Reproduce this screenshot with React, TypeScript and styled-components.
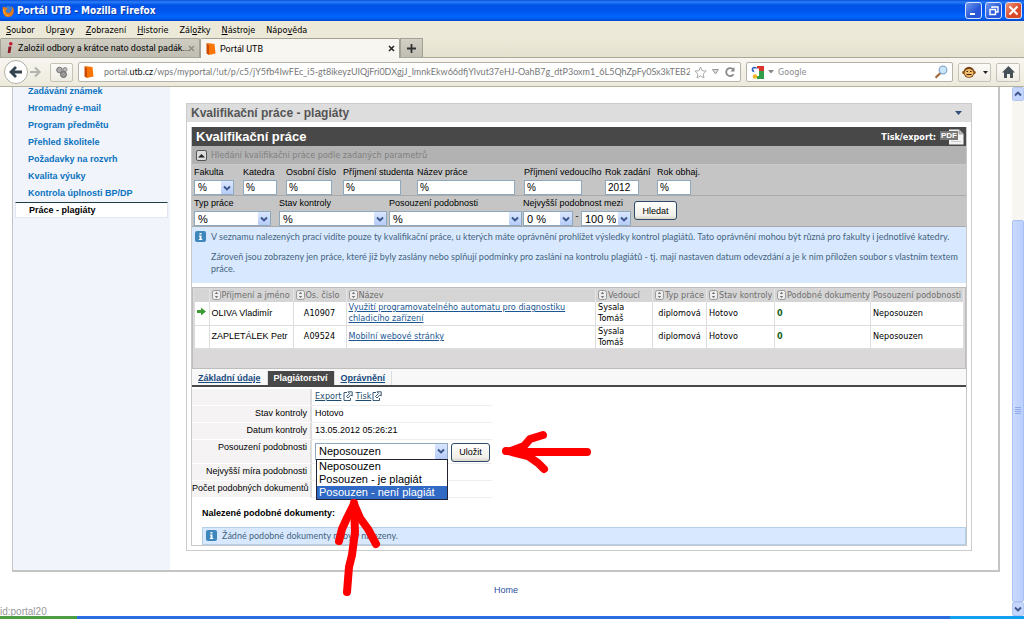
import React from "react";
import styled, { createGlobalStyle, css } from "styled-components";

const ui = `"DejaVu Sans Condensed", "DejaVu Sans", sans-serif`;
const page = `"Liberation Sans", Arial, sans-serif`;
const slim = `Roboto, "Liberation Sans", sans-serif`;
const note = `Lato, "Liberation Sans", sans-serif`;

const GlobalStyle = createGlobalStyle`
  * { box-sizing: border-box; }
  body { margin: 0; background: #fff; font-family: ${page}; font-size: 9px; color: #000; }
  button, input, select { font: inherit; color: inherit; }
`;

const Window = styled.div`
  display: flex;
  flex-direction: column;
  height: 100vh;
  overflow: hidden;
`;

/* ---------- browser chrome ---------- */

const TitleBar = styled.header`
  display: flex;
  align-items: center;
  gap: 3px;
  flex: none;
  height: 21px;
  padding: 0 2px;
  color: #fff;
  font: bold 10px/20px ${ui};
  text-shadow: 1px 1px 0 #0b3aa8;
  background: linear-gradient(#0a4fd8 0, #2a7ffb 2px, #0053e4 5px, #0055ee 11px, #0267ff 17px, #0148cf 21px);
`;
const WindowTitle = styled.span`
  flex: 1;
`;
const WindowButton = styled.button<{ $close?: boolean }>`
  display: flex;
  align-items: center;
  justify-content: center;
  width: 17px;
  height: 17px;
  margin: 0;
  padding: 0;
  border: 1px solid #d6e2fb;
  border-radius: 3px;
  background: ${(p) => (p.$close ? "linear-gradient(135deg, #ef9678, #d8492a 60%)" : "linear-gradient(135deg, #6f97ee, #2757d8 60%)")};
`;

const MenuBar = styled.nav`
  display: flex;
  flex: none;
  gap: 11px;
  height: 17px;
  padding: 0 6px;
  background: #ece9d8;
`;
const MenuItem = styled.button`
  padding: 0;
  border: 0;
  background: none;
  font: 9px/16px ${ui};
`;

const TabStrip = styled.div`
  display: flex;
  flex: none;
  height: 20px;
  background: linear-gradient(#ece9d8, #e4e1cf);
  border-bottom: 1px solid #aaa898;
`;
const BrowserTab = styled.div<{ $active?: boolean }>`
  display: flex;
  align-items: center;
  gap: 3px;
  width: 200px;
  height: ${(p) => (p.$active ? 20 : 19)}px;
  padding: 0 4px;
  border: 1px solid #a3a193;
  border-bottom: 0;
  border-radius: 2px 2px 0 0;
  font: 9px/18px ${slim};
  white-space: nowrap;
  background: ${(p) => (p.$active ? "#f8f6f0" : "linear-gradient(#cfcdc2, #c0beb3)")};
`;
const TabText = styled.span`
  flex: 1;
  min-width: 0;
`;
const TabClose = styled.button<{ $faded?: boolean }>`
  display: flex;
  padding: 0;
  border: 0;
  background: none;
  color: ${(p) => (p.$faded ? "#8f8d84" : "#222")};
`;
const NewTab = styled.button`
  display: flex;
  align-items: center;
  justify-content: center;
  width: 23px;
  height: 19px;
  padding: 0;
  border: 1px solid #a3a193;
  border-bottom: 0;
  background: linear-gradient(#d2d0c5, #c0beb3);
`;

const NavBar = styled.div`
  display: flex;
  align-items: center;
  flex: none;
  gap: 5px;
  height: 29px;
  padding: 0 4px;
  background: linear-gradient(#f8f6f0, #ece9dc);
  border-bottom: 1px solid #b4b19d;
`;
const NavHistory = styled.div`
  display: flex;
  align-items: center;
  width: 41px;
`;
const BackButton = styled.button`
  display: flex;
  align-items: center;
  justify-content: center;
  width: 24px;
  height: 24px;
  padding: 0;
  border: 1px solid #b2b0a6;
  border-radius: 50%;
  background: #fff;
`;
const PlainButton = styled.button`
  display: flex;
  padding: 0;
  border: 0;
  background: none;
`;
const NavButton = styled.button<{ $w: number }>`
  display: flex;
  align-items: center;
  justify-content: center;
  flex: none;
  gap: 7px;
  width: ${(p) => p.$w}px;
  height: 19px;
  padding: 0;
  border: 1px solid #c5c3b8;
  border-radius: 2px;
  background: linear-gradient(#fcfbf8, #eeece2);
`;
const AddressBox = styled.div<{ $search?: boolean }>`
  display: flex;
  align-items: center;
  gap: 4px;
  flex: ${(p) => (p.$search ? "0 0 207px" : "1 1 0")};
  min-width: 0;
  height: 20px;
  padding: 0 4px;
  border: 1px solid #b5b3a8;
  border-radius: 2px;
  background: #fff;
  color: #777;
  font: 9px/16px ${note};
`;
const Url = styled.span`
  flex: 1;
  min-width: 0;
  padding-left: 5px;
  overflow: hidden;
  white-space: nowrap;
  b { font-weight: normal; color: #111; }
`;
const SearchInput = styled.input`
  flex: 1;
  min-width: 0;
  padding: 0;
  border: 0;
  outline: 0;
  background: none;
  font: 9px/16px ${ui};
  &::placeholder { color: #8a8a8a; opacity: 1; }
`;

/* ---------- page frame ---------- */

const Viewport = styled.div`
  display: flex;
  flex: 1;
  min-height: 0;
`;
const PageArea = styled.div`
  position: relative;
  flex: 1;
  min-width: 0;
  overflow: hidden;
`;
const Portal = styled.div`
  display: flex;
  margin: 0 12px;
  border: 1px solid #c4c4c4;
  border-width: 0 2px 2px 1px;
`;
const Sidebar = styled.nav`
  flex: 0 0 157px;
  background: #f2f4fb;
`;
const SideList = styled.ul`
  margin: -4px 0 0;
  padding: 0 2px;
  list-style: none;
`;
const SideLink = styled.a<{ $current?: boolean }>`
  display: block;
  padding-left: 13px;
  font: bold 9px/17px ${page};
  color: #0a72bf;
  text-decoration: none;
  ${(p) =>
    p.$current &&
    css`
      color: #000;
      background: #fff;
      border: 1px solid #e3e6ee;
      border-top-color: #1d3f45;
      line-height: 14px;
    `}
`;
const Main = styled.main`
  flex: 1;
  min-width: 0;
  padding: 16px 26px 19px 16px;
`;
const Portlet = styled.section`
  border: 1px solid #ccc;
`;
const PortletHead = styled.h1`
  display: flex;
  align-items: center;
  justify-content: space-between;
  height: 18px;
  margin: 0;
  padding: 0 9px 0 4px;
  background: #ddd;
  font: bold 12px/18px ${page};
  color: #555;
`;
const PortletBody = styled.div`
  margin: 5px 4px 4px;
  border: 1px solid #c8c8c8;
  border-top: 0;
`;
const SectionHead = styled.div`
  display: flex;
  align-items: center;
  justify-content: space-between;
  height: 19px;
  padding: 0 2px 0 4px;
  background: #484848;
  color: #fff;
`;
const SectionTitle = styled.h2`
  margin: 0;
  font: bold 13px/18px ${page};
`;
const ExportLink = styled.a`
  display: flex;
  align-items: center;
  gap: 4px;
  color: #fff;
  font: bold 9px/16px ${ui};
  text-decoration: none;
`;

/* ---------- search form ---------- */

const SearchToggle = styled.div`
  display: flex;
  align-items: center;
  gap: 4px;
  height: 19px;
  padding: 0 4px;
  background: #b2b2b2;
  border-bottom: 1px solid #c9c9c9;
  color: #808080;
  font: 9px/16px ${ui};
`;
const ToggleButton = styled.button`
  display: flex;
  align-items: center;
  justify-content: center;
  width: 11px;
  height: 11px;
  padding: 0;
  border: 1px solid #555;
  border-radius: 2px;
  background: #ddd;
`;
const FieldRow = styled.div<{ $cols: string }>`
  display: grid;
  grid-template-columns: ${(p) => p.$cols};
  padding: 0 2px;
  height: 31px;
  background: #c5c5c5;
  border-bottom: 1px solid #aaa;
`;
const Field = styled.div`
  min-width: 0;
  label {
    display: block;
    line-height: 15px;
    white-space: nowrap;
  }
`;
const TextInput = styled.input<{ $w: number }>`
  display: block;
  width: ${(p) => p.$w}px;
  height: 15px;
  padding: 0 2px;
  border: 1px solid #8ea8bd;
  background: #fff;
  font-size: 10px;
`;
const SelectWrap = styled.span<{ $w: number; $h?: number; $size?: number }>`
  position: relative;
  display: inline-block;
  width: ${(p) => p.$w}px;
  height: ${(p) => p.$h ?? 15}px;
  vertical-align: top;
  font-size: ${(p) => p.$size ?? 11}px;
  select {
    display: block;
    width: 100%;
    height: 100%;
    padding: 0 14px 0 3px;
    border: 1px solid #8ea8bd;
    border-radius: 0;
    outline: 0;
    appearance: none;
    background: #fff;
  }
`;
const ArrowBox = styled.span`
  position: absolute;
  top: 1px;
  right: 1px;
  bottom: 1px;
  display: flex;
  align-items: center;
  justify-content: center;
  width: 12px;
  border-radius: 1px;
  background: linear-gradient(#dbe6fe, #b5ccf8);
  pointer-events: none;
`;
const RangeRow = styled.div`
  display: flex;
  justify-content: space-between;
  width: 108px;
`;
const PushButton = styled.button<{ $w: number }>`
  width: ${(p) => p.$w}px;
  height: 19px;
  padding: 0;
  border: 1px solid #2d4a68;
  border-radius: 3px;
  background: linear-gradient(#fff, #f0efe8 80%, #d9d5c9);
  line-height: 16px;
`;
const ButtonSlot = styled.div`
  padding-top: 5px;
`;
const InfoBox = styled.div<{ $inline?: boolean }>`
  display: flex;
  gap: 5px;
  padding: 4px 2px 0 3px;
  background: #d8e9ff;
  color: #456480;
  font: 9px/12px ${note};
  p { margin: 0; }
  svg { flex: none; }
  ${(p) =>
    p.$inline
      ? css`
          height: 18px;
          margin-left: 10px;
          padding-top: 0;
          align-items: center;
          border: 1px solid #b5cfe8;
        `
      : css`
          min-height: 56px;
          p + p { margin-top: 8px; }
        `}
`;

/* ---------- results ---------- */

const Results = styled.div`
  margin-top: 4px;
  padding: 1px 1px 19px 2px;
  border: 1px solid #bdbdbd;
  background: #dad8d9;
`;
const ResultTable = styled.table`
  width: 100%;
  table-layout: fixed;
  border-collapse: collapse;
  font: 9px/11px ${ui};
  th {
    height: 13px;
    padding: 0 2px;
    font-weight: normal;
    text-align: left;
    color: #6e6e6e;
    background: #d6d5d5;
    white-space: nowrap;
    border-right: 1px solid #e6e6e6;
  }
  th svg { vertical-align: -2px; margin-right: 1px; }
  td {
    height: 23px;
    padding: 0 2px;
    background: #fff;
    border-right: 1px solid #ddd;
    border-bottom: 1px solid #ddd;
  }
`;
const NameCell = styled.td`
  white-space: nowrap;
  font-family: ${page};
`;
const CenterCell = styled.td`
  text-align: center;
`;
const CountCell = styled.td`
  color: #14641c;
  font-weight: bold;
`;
const ThesisLink = styled.a`
  color: #1a5794;
`;

/* ---------- detail ---------- */

const DetailTabs = styled.div`
  display: flex;
  height: 18px;
  padding-top: 2px;
  border-bottom: 2px solid #484848;
  background: #f8f8f8;
`;
const DetailTab = styled.a<{ $active?: boolean }>`
  padding: 0 6px;
  border-right: 1px solid #ddd;
  font: bold 9px/14px ${page};
  color: ${(p) => (p.$active ? "#fff" : "#17497e")};
  background: ${(p) => (p.$active ? "#484848" : "transparent")};
  text-decoration: ${(p) => (p.$active ? "none" : "underline")};
`;
const Detail = styled.div`
  position: relative;
  padding-top: 2px;
`;
const DetailRow = styled.div<{ $tall?: boolean }>`
  display: grid;
  grid-template-columns: 120px 1fr;
  width: 300px;
  height: ${(p) => (p.$tall ? 24 : 17)}px;
  line-height: 15px;
`;
const DetailLabel = styled.label`
  padding-right: 3px;
  border-right: 2px solid #ddd;
  border-bottom: 1px solid #fff;
  background: #f5f3f4;
  text-align: right;
  white-space: nowrap;
`;
const DetailValue = styled.div<{ $control?: boolean }>`
  display: flex;
  gap: 3px;
  padding: ${(p) => (p.$control ? "3px 0 0 3px" : "0 0 0 3px")};
  border-bottom: 1px solid #f0eeee;
`;
const ToolLink = styled.a`
  display: flex;
  align-items: center;
  gap: 1px;
  font: 9px/15px ${ui};
  color: #1d4a6d;
`;
const OptionList = styled.ul`
  position: absolute;
  top: 16px;
  left: 1px;
  z-index: 2;
  width: 132px;
  margin: 0;
  padding: 0;
  border: 1px solid #223;
  background: #fff;
  list-style: none;
  li {
    padding: 0 2px;
    font-size: 11px;
    line-height: 13px;
    white-space: nowrap;
  }
  li[aria-selected="true"] { background: #316ac5; color: #fff; }
`;
const FoundTitle = styled.h3`
  margin: 8px 0 7px 10px;
  font: bold 9px/14px ${page};
`;
const Marks = styled.svg`
  position: absolute;
  top: 0;
  left: 0;
  z-index: 3;
  width: 410px;
  height: 220px;
  overflow: visible;
  pointer-events: none;
`;
const Footer = styled.footer`
  padding-top: 11px;
  text-align: center;
  a { font: 9px/14px ${page}; color: #2d4f9c; text-decoration: none; }
`;
const StatusText = styled.div`
  position: absolute;
  bottom: -2px;
  left: 0;
  font: 10px/12px ${page};
  color: #999;
`;

/* ---------- scroll bar and task bar ---------- */

const ScrollBar = styled.div`
  display: flex;
  flex-direction: column;
  flex: 0 0 12px;
  background: #f7f6f1;
`;
const ScrollButton = styled.button`
  display: flex;
  align-items: center;
  justify-content: center;
  height: 14px;
  padding: 0;
  border: 1px solid #b5c8f2;
  border-radius: 2px;
  background: #c5d5fd;
`;
const ScrollTrack = styled.div`
  display: grid;
  flex: 1;
  grid-template-rows: 30fr 96fr;
`;
const ScrollThumb = styled.div`
  grid-row: 2;
  display: flex;
  align-items: center;
  justify-content: center;
  border: 1px solid #a9c0f3;
  border-radius: 2px;
  background: linear-gradient(90deg, #cbdafe, #bacffc);
`;
const TaskBar = styled.div`
  display: grid;
  grid-template-columns: 77px 1fr 74px;
  flex: none;
  height: 3px;
  background: #2a6de0;
`;
const StartEdge = styled.span`
  background: #4c9d44;
`;
const TrayEdge = styled.span`
  grid-column: 3;
  background: #139ff0;
`;

/* ---------- drawings ---------- */

const Chevron = ({ up }: { up?: boolean }) => (
  <svg width={8} height={6} viewBox="0 0 8 6" aria-hidden="true">
    <path d={up ? "M1 4.5 4 1.5 7 4.5" : "M1 1.5 4 4.5 7 1.5"} fill="none" stroke="#3a548c" strokeWidth="1.9" />
  </svg>
);
const CloseIcon = () => (
  <svg width="7" height="7" viewBox="0 0 7 7" aria-hidden="true">
    <path d="M1 1 6 6M6 1 1 6" stroke="currentColor" strokeWidth="1.5" />
  </svg>
);
const FirefoxLogo = () => (
  <svg width="12" height="14" viewBox="0 0 12 14" aria-hidden="true">
    <circle cx="6.3" cy="6.5" r="4.6" fill="#3d7fd0" />
    <path d="M1 2C0 7 1 13 6.2 13 10.500 13 12 9.500 11.800 6 11.500 4 10.500 2.500 9.500 2 10.800 5 9.500 8.500 7 9 4.500 9.300 3.300 7.500 4 6L6 5 4 3.500 2 3.200Z" fill="#e77817" />
    <path d="M1.500 5C1.500 9 3.500 11.500 6.500 11.500" fill="none" stroke="#fbc331" />
  </svg>
);
const PortalIcon = () => (
  <svg width="12" height="14" viewBox="0 0 12 14" aria-hidden="true">
    <path d="M1.500 1 4 2.500V13L1.500 11.500Z" fill="#c94b00" />
    <path d="M2 1 9.500 2 10.500 11.500 4 13V2.500Z" fill="#fb7406" />
  </svg>
);
const NewsIcon = () => (
  <svg width="10" height="14" viewBox="0 0 10 14" aria-hidden="true">
    <circle cx="5.800" cy="2.700" r="1.800" fill="#c51a2c" />
    <path d="M3.500 5.500H6.500L5.300 12H2.700Z" fill="#8c1a26" />
  </svg>
);
const InfoIcon = () => (
  <svg width="11" height="11" viewBox="0 0 11 11" aria-hidden="true">
    <rect width="11" height="11" rx="2" fill="#3d87bd" />
    <path d="M4.500 2H6.500V3.500H4.500ZM4 4.500H6.500V8H7.300V9H3.800V8H4.600V5.500H4Z" fill="#fff" />
  </svg>
);
const SortIcon = () => (
  <svg width="9" height="10" viewBox="0 0 9 10" aria-hidden="true">
    <rect x=".5" y=".5" width="8" height="9" rx="2" fill="#eee" stroke="#999" />
    <path d="M4.500 1.800 6.200 4H2.800ZM4.500 8.200 6.200 6H2.800Z" fill="#777" />
  </svg>
);
const RowArrow = () => (
  <svg width="9" height="9" viewBox="0 0 9 9" aria-hidden="true">
    <path d="M0 3H4V.5L9 4.500 4 8.500V6H0Z" fill="#3d9a35" />
  </svg>
);
const ExternalIcon = () => (
  <svg width="10" height="11" viewBox="0 0 10 11" aria-hidden="true">
    <path d="M4 1.500H1V9.500H7.500V7M5 .8H9.200V5L7.900 3.800 5 7 3.500 5.500 6.500 2.400Z" fill="none" stroke="#3b5a75" />
  </svg>
);
const PdfIcon = () => (
  <svg width="24" height="16" viewBox="0 0 24 16" aria-hidden="true">
    <path d="M9 .5H19L23.500 5V15.500H9Z" fill="#f3f3f3" />
    <path d="M19 .5V5H23.500" fill="#bbb" stroke="#888" strokeWidth=".6" />
    <path d="M11 12.500H21" stroke="#ccc" />
    <rect y="2" width="18" height="9" fill="#777" />
    <text x="1" y="9" fontFamily="Liberation Sans" fontSize="8" fontWeight="bold" fill="#fff">PDF</text>
  </svg>
);

type SelectBoxProps = { id: string; value: string; w: number; h?: number; size?: number; label?: string };
const SelectBox = ({ id, value, w, h, size, label }: SelectBoxProps) => (
  <SelectWrap $w={w} $h={h} $size={size}>
    <select id={id} aria-label={label} defaultValue={value}>
      <option>{value}</option>
    </select>
    <ArrowBox>
      <Chevron />
    </ArrowBox>
  </SelectWrap>
);

const menu = [
  ["", "S", "oubor"],
  ["Úpr", "a", "vy"],
  ["", "Z", "obrazení"],
  ["", "H", "istorie"],
  ["Zál", "o", "žky"],
  ["", "N", "ástroje"],
  ["Nápo", "v", "ěda"],
];
const sideItems = [
  "Zadávání známek",
  "Hromadný e-mail",
  "Program předmětu",
  "Přehled školitele",
  "Požadavky na rozvrh",
  "Kvalita výuky",
  "Kontrola úplnosti BP/DP",
];
const textFields = [
  { id: "katedra", label: "Katedra", value: "%", w: 34 },
  { id: "cislo", label: "Osobní číslo", value: "%", w: 46 },
  { id: "student", label: "Příjmení studenta", value: "%", w: 58 },
  { id: "nazev", label: "Název práce", value: "%", w: 98 },
  { id: "vedouci", label: "Příjmení vedoucího", value: "%", w: 58 },
  { id: "zadani", label: "Rok zadání", value: "2012", w: 34 },
  { id: "obhaj", label: "Rok obhaj.", value: "%", w: 34 },
];
const headers = ["Příjmení a jméno", "Os. číslo", "Název", "Vedoucí", "Typ práce", "Stav kontroly", "Podobné dokumenty"];
const theses = [
  { name: "OLIVA Vladimír", no: "A10907", title: "Využití programovatelného automatu pro diagnostiku chladicího zařízení", current: true },
  { name: "ZAPLETÁLEK Petr", no: "A09524", title: "Mobilní webové stránky", current: false },
];
const columnWidths = [14, 84, 53, 0, 57, 54, 68, 96, 93];

export default function App() {
  return (
    <Window>
      <GlobalStyle />
      <TitleBar>
        <FirefoxLogo />
        <WindowTitle>Portál UTB - Mozilla Firefox</WindowTitle>
        <WindowButton aria-label="Minimalizovat">
          <svg width="11" height="11"><path d="M2 9H7" stroke="#fff" strokeWidth="2" /></svg>
        </WindowButton>
        <WindowButton aria-label="Obnovit">
          <svg width="11" height="11"><path d="M4 3V2H10V7H8M2 4.500H7.500V9.500H2Z" fill="none" stroke="#fff" strokeWidth="1.400" /></svg>
        </WindowButton>
        <WindowButton $close aria-label="Zavřít">
          <svg width="11" height="11"><path d="M1.500 1.500 9.500 9.500M9.500 1.500 1.500 9.500" stroke="#fff" strokeWidth="2" /></svg>
        </WindowButton>
      </TitleBar>
      <MenuBar>
        {menu.map(([a, b, c]) => (
          <MenuItem key={a + b + c}>{a}<u>{b}</u>{c}</MenuItem>
        ))}
      </MenuBar>
      <TabStrip>
        <BrowserTab>
          <NewsIcon />
          <TabText>Založil odbory a krátce nato dostal padák...</TabText>
          <TabClose $faded aria-label="Zavřít panel"><CloseIcon /></TabClose>
        </BrowserTab>
        <BrowserTab $active>
          <PortalIcon />
          <TabText>Portál UTB</TabText>
          <TabClose aria-label="Zavřít panel"><CloseIcon /></TabClose>
        </BrowserTab>
        <NewTab aria-label="Nový panel">
          <svg width="9" height="9"><path d="M4.500 0V9M0 4.500H9" stroke="#333" strokeWidth="1.800" /></svg>
        </NewTab>
      </TabStrip>
      <NavBar>
        <NavHistory>
          <BackButton aria-label="Zpět">
            <svg width="14" height="12"><path d="M7 1 2 6 7 11M2.500 6H13" fill="none" stroke="#34424f" strokeWidth="2.800" /></svg>
          </BackButton>
          <PlainButton aria-label="Vpřed">
            <svg width="14" height="12"><path d="M7 1.500 11.500 6 7 10.500M2 6H11" fill="none" stroke="#b4b4b0" strokeWidth="2.200" /></svg>
          </PlainButton>
        </NavHistory>
        <NavButton $w={23} aria-label="Doplněk">
          <svg width="14" height="13" viewBox="0 0 14 13">
            <circle cx="4.500" cy="4" r="2.800" fill="#aaa" stroke="#777" />
            <circle cx="10" cy="3.500" r="2" fill="#bbb" stroke="#888" />
            <circle cx="8.500" cy="8.500" r="3" fill="#999" stroke="#666" />
          </svg>
        </NavButton>
        <AddressBox>
          <PortalIcon />
          <Url>portal.<b>utb.cz</b>/wps/myportal/!ut/p/c5/jY5fb4IwFEc_i5-gt8ikeyzUIQjFri0DXgjJ_lmnkEkw66dfjYlvut37eHJ-OahB7g_dtP3oxm1_6L5QhZpFy0Sx3kTEB2A4gESk</Url>
          <svg width="13" height="13" viewBox="0 0 13 13"><path d="M6.500 1 8.100 4.700 12.200 5.100 9.200 7.900 10 12 6.500 9.900 3 12 3.800 7.900.8 5.100 4.900 4.700Z" fill="#fff" stroke="#aaa" /></svg>
          <svg width="9" height="8"><path d="M1.500 1.500H7.500L4.500 6Z" fill="#ddd" stroke="#999" /></svg>
          <svg width="12" height="12" viewBox="0 0 12 12"><path d="M9.500 8.300A4 4 0 1 1 9.300 3.500" fill="none" stroke="#888" strokeWidth="1.800" /><path d="M10.500 1V5.500H6.500Z" fill="#888" /></svg>
        </AddressBox>
        <AddressBox $search>
          <svg width="13" height="13" viewBox="0 0 13 13">
            <rect x="6" width="7" height="6" fill="#d9342b" />
            <rect x="6" y="5" width="7" height="8" fill="#2f9e48" />
            <circle cx="3.500" cy="3.500" r="2.800" fill="#2a5fc0" />
            <path d="M2 2.500H8V10H5Z" fill="#fff" />
            <circle cx="4" cy="10.500" r="2.300" fill="#f4b52a" />
          </svg>
          <svg width="6" height="4"><path d="M0 0H6L3 3.500Z" fill="#888" /></svg>
          <SearchInput aria-label="Hledat" placeholder="Google" />
          <svg width="14" height="14" viewBox="0 0 14 14"><path d="M6.500 8 1.500 12.800" stroke="#a0683c" strokeWidth="2.200" /><circle cx="9" cy="5" r="3.800" fill="#cde7fa" stroke="#85abd0" strokeWidth="1.300" /></svg>
        </AddressBox>
        <NavButton $w={33} aria-label="Greasemonkey">
          <svg width="14" height="14" viewBox="0 0 14 14">
            <circle cx="2" cy="7.500" r="1.800" fill="#9b5a1f" /><circle cx="12" cy="7.500" r="1.800" fill="#9b5a1f" />
            <circle cx="7" cy="7.300" r="5.500" fill="#7a4315" />
            <ellipse cx="7" cy="8" rx="4.500" ry="4" fill="#edbd68" />
            <path d="M4.500 6.500H6M8 6.500H9.500M4.500 9.500H9.500" stroke="#43240b" />
          </svg>
          <svg width="5" height="3"><path d="M0 0H5L2.500 3Z" fill="#222" /></svg>
        </NavButton>
        <NavButton $w={24} aria-label="Domů">
          <svg width="13" height="12" viewBox="0 0 13 12"><path d="M6.500 0 13 6.500H11V12H8V8H5V12H2V6.500H0Z" fill="#465057" /></svg>
        </NavButton>
      </NavBar>

      <Viewport>
        <PageArea>
          <Portal>
            <Sidebar>
              <SideList>
                {sideItems.map((s) => (
                  <li key={s}><SideLink href="#">{s}</SideLink></li>
                ))}
                <li><SideLink href="#" $current>Práce - plagiáty</SideLink></li>
              </SideList>
            </Sidebar>
            <Main>
              <Portlet>
                <PortletHead>
                  Kvalifikační práce - plagiáty
                  <svg width="7" height="4"><path d="M0 0H7L3.500 4Z" fill="#2f4f7c" /></svg>
                </PortletHead>
                <PortletBody>
                  <SectionHead>
                    <SectionTitle>Kvalifikační práce</SectionTitle>
                    <ExportLink href="#">Tisk/export: <PdfIcon /></ExportLink>
                  </SectionHead>
                  <SearchToggle>
                    <ToggleButton aria-label="Skrýt hledání">
                      <svg width="7" height="5"><path d="M0 4.500 3.500 1 7 4.500Z" fill="#222" /></svg>
                    </ToggleButton>
                    Hledání kvalifikační práce podle zadaných parametrů
                  </SearchToggle>
                  <FieldRow $cols="49px 43px 57px 74px 107px 81px 52px 1fr">
                    <Field>
                      <label htmlFor="fakulta">Fakulta</label>
                      <SelectBox id="fakulta" value="%" w={40} size={10} />
                    </Field>
                    {textFields.map((f) => (
                      <Field key={f.id}>
                        <label htmlFor={f.id}>{f.label}</label>
                        <TextInput id={f.id} defaultValue={f.value} $w={f.w} />
                      </Field>
                    ))}
                  </FieldRow>
                  <FieldRow $cols="85px 110px 134px 111px 1fr">
                    <Field>
                      <label htmlFor="typ">Typ práce</label>
                      <SelectBox id="typ" value="%" w={77} />
                    </Field>
                    <Field>
                      <label htmlFor="stav">Stav kontroly</label>
                      <SelectBox id="stav" value="%" w={108} />
                    </Field>
                    <Field>
                      <label htmlFor="posouzeni">Posouzení podobnosti</label>
                      <SelectBox id="posouzeni" value="%" w={133} />
                    </Field>
                    <Field>
                      <label htmlFor="od">Nejvyšší podobnost mezi</label>
                      <RangeRow>
                        <SelectBox id="od" value="0 %" w={50} />
                        <span>-</span>
                        <SelectBox id="do" label="Nejvyšší podobnost do" value="100 %" w={50} />
                      </RangeRow>
                    </Field>
                    <ButtonSlot><PushButton $w={43}>Hledat</PushButton></ButtonSlot>
                  </FieldRow>
                  <InfoBox>
                    <InfoIcon />
                    <div>
                      <p>V seznamu nalezených prací vidíte pouze ty kvalifikační práce, u kterých máte oprávnění prohlížet výsledky kontrol plagiátů. Tato oprávnění mohou být různá pro fakulty i jednotlivé katedry.</p>
                      <p>Zároveň jsou zobrazeny jen práce, které již byly zaslány nebo splňují podmínky pro zaslání na kontrolu plagiátů - tj. mají nastaven datum odevzdání a je k nim přiložen soubor s vlastním textem práce.</p>
                    </div>
                  </InfoBox>

                  <Results>
                    <ResultTable>
                      <colgroup>
                        {columnWidths.map((w, i) => (
                          <col key={i} width={w || undefined} />
                        ))}
                      </colgroup>
                      <thead>
                        <tr>
                          <th />
                          {headers.map((h) => (
                            <th key={h}><SortIcon />{h}</th>
                          ))}
                          <th>Posouzení podobnosti</th>
                        </tr>
                      </thead>
                      <tbody>
                        {theses.map((t) => (
                          <tr key={t.no}>
                            <td>{t.current && <RowArrow />}</td>
                            <NameCell>{t.name}</NameCell>
                            <CenterCell>{t.no}</CenterCell>
                            <td><ThesisLink href="#">{t.title}</ThesisLink></td>
                            <td>Sysala<br />Tomáš</td>
                            <CenterCell>diplomová</CenterCell>
                            <td>Hotovo</td>
                            <CountCell>0</CountCell>
                            <td>Neposouzen</td>
                          </tr>
                        ))}
                      </tbody>
                    </ResultTable>
                  </Results>

                  <DetailTabs>
                    <DetailTab href="#">Základní údaje</DetailTab>
                    <DetailTab href="#" $active>Plagiátorství</DetailTab>
                    <DetailTab href="#">Oprávnění</DetailTab>
                  </DetailTabs>
                  <Detail>
                    <DetailRow>
                      <DetailLabel as="span" />
                      <DetailValue>
                        <ToolLink href="#">Export<ExternalIcon /></ToolLink>
                        <ToolLink href="#">Tisk<ExternalIcon /></ToolLink>
                      </DetailValue>
                    </DetailRow>
                    <DetailRow>
                      <DetailLabel as="span">Stav kontroly</DetailLabel>
                      <DetailValue>Hotovo</DetailValue>
                    </DetailRow>
                    <DetailRow>
                      <DetailLabel as="span">Datum kontroly</DetailLabel>
                      <DetailValue>13.05.2012 05:26:21</DetailValue>
                    </DetailRow>
                    <DetailRow $tall>
                      <DetailLabel htmlFor="posudek">Posouzení podobnosti</DetailLabel>
                      <DetailValue $control>
                        <SelectWrap $w={133} $h={17} $size={11}>
                          <select id="posudek" defaultValue="Neposouzen">
                            <option>Neposouzen</option>
                            <option>Posouzen - je plagiát</option>
                            <option>Posouzen - není plagiát</option>
                          </select>
                          <ArrowBox><Chevron /></ArrowBox>
                          <OptionList role="listbox" aria-label="Posouzení podobnosti">
                            <li role="option" aria-selected="false">Neposouzen</li>
                            <li role="option" aria-selected="false">Posouzen - je plagiát</li>
                            <li role="option" aria-selected="true">Posouzen - není plagiát</li>
                          </OptionList>
                        </SelectWrap>
                        <PushButton $w={39}>Uložit</PushButton>
                      </DetailValue>
                    </DetailRow>
                    <DetailRow>
                      <DetailLabel as="span">Nejvyšší míra podobnosti</DetailLabel>
                      <DetailValue />
                    </DetailRow>
                    <DetailRow>
                      <DetailLabel as="span">Počet podobných dokumentů</DetailLabel>
                      <DetailValue />
                    </DetailRow>
                    <FoundTitle>Nalezené podobné dokumenty:</FoundTitle>
                    <InfoBox $inline>
                      <InfoIcon />
                      <p>Žádné podobné dokumenty nebyly nalezeny.</p>
                    </InfoBox>
                    <Marks viewBox="0 0 410 220" aria-hidden="true">
                      <g fill="none" stroke="#fe0000" strokeLinecap="round" strokeLinejoin="round">
                        <path d="M314 64 335 65 395 65" strokeWidth="8" />
                        <path d="M319 64 332 59 338 52 351 48" strokeWidth="8" />
                        <path d="M320 65 336 69 346 76 352 82" strokeWidth="8" />
                        <path d="M162 116 163 145 160 168 157 180 155 205" strokeWidth="8" />
                        <path d="M162 117 155 131 150 142 147 154" strokeWidth="8" />
                        <path d="M162 117 168 131 176 142 184 157" strokeWidth="8" />
                      </g>
                    </Marks>
                  </Detail>
                </PortletBody>
              </Portlet>
            </Main>
          </Portal>
          <Footer><a href="#">Home</a></Footer>
          <StatusText>id:portal20</StatusText>
        </PageArea>
        <ScrollBar>
          <ScrollButton aria-label="Nahoru"><Chevron up /></ScrollButton>
          <ScrollTrack>
            <ScrollThumb>
              <svg width="6" height="8"><path d="M0 .5H6M0 2.500H6M0 4.500H6M0 6.500H6" stroke="#8fabec" /></svg>
            </ScrollThumb>
          </ScrollTrack>
          <ScrollButton aria-label="Dolů"><Chevron /></ScrollButton>
        </ScrollBar>
      </Viewport>
      <TaskBar><StartEdge /><TrayEdge /></TaskBar>
    </Window>
  );
}
